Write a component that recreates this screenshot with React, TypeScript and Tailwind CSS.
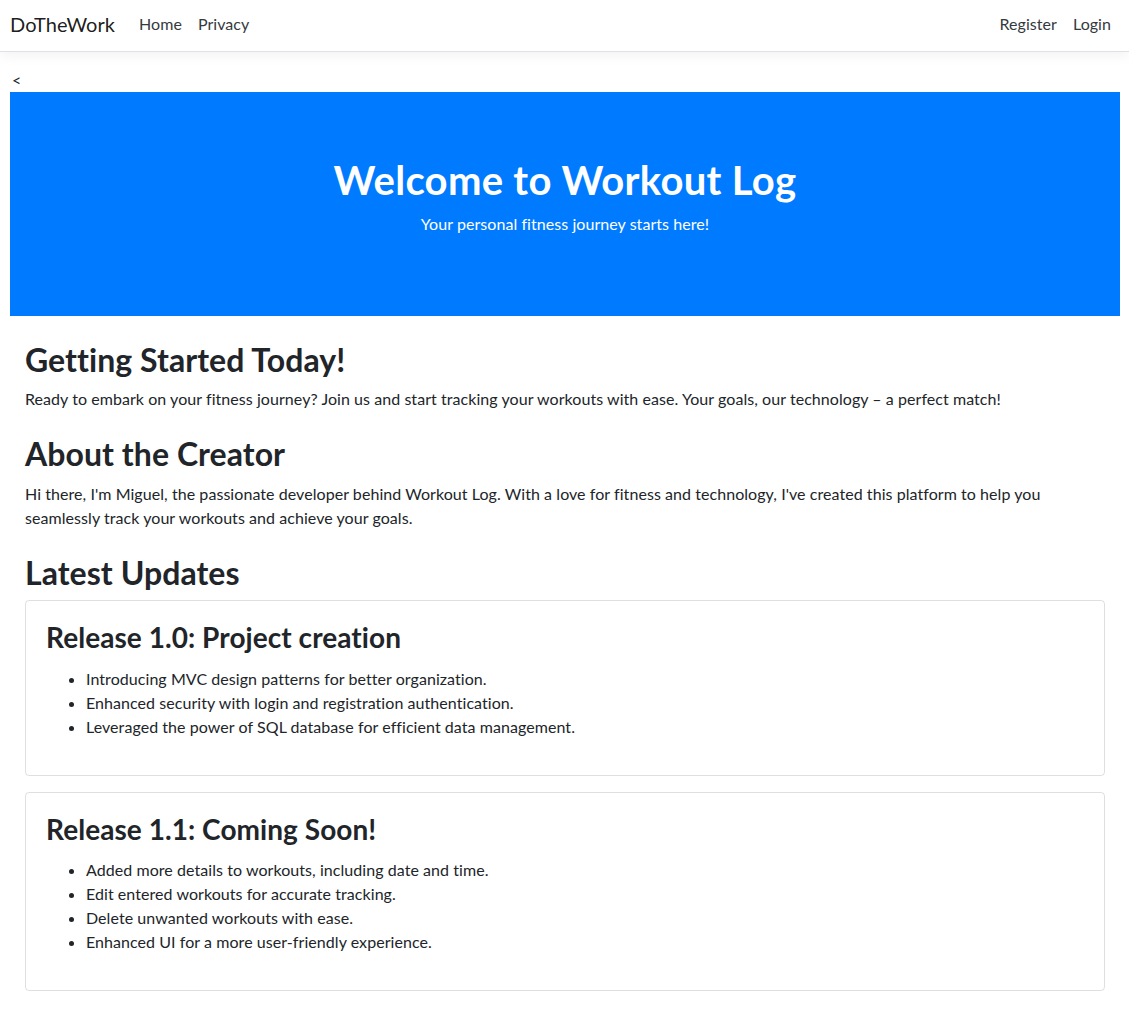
const releases = [
    {
        title: 'Release 1.0: Project creation',
        items: [
            'Introducing MVC design patterns for better organization.',
            'Enhanced security with login and registration authentication.',
            'Leveraged the power of SQL database for efficient data management.',
        ],
    },
    {
        title: 'Release 1.1: Coming Soon!',
        items: [
            'Added more details to workouts, including date and time.',
            'Edit entered workouts for accurate tracking.',
            'Delete unwanted workouts with ease.',
            'Enhanced UI for a more user-friendly experience.',
        ],
    },
];

export default function App() {
    return (
        <div className="min-h-screen bg-white text-[#212529] text-[16px] leading-6 tracking-[0.06px] font-['Lato','Liberation_Sans',sans-serif]">
            <nav className="h-[52px] bg-white border-b border-[#dee2e6] shadow-[0_4px_12px_rgba(0,0,0,0.05)] flex items-center px-[10px] pb-1 mb-4">
                <a href="#" className="text-[20px] text-[rgba(0,0,0,0.9)] mr-4">DoTheWork</a>
                <a href="#" className="px-2 text-[#343a40]">Home</a>
                <a href="#" className="px-2 text-[#343a40]">Privacy</a>
                <div className="ml-auto flex">
                    <a href="#" className="px-2 text-[#343a40]">Register</a>
                    <a href="#" className="px-2 text-[#343a40]">Login</a>
                </div>
            </nav>

            <main className="pl-[10px] pr-[9px]">
                <div className="h-6 leading-6 text-[16px] pl-[2px]">
                    <a href="#" className="text-[#212529]">&lt;</a>
                </div>

                <div className="bg-[#007bff] text-white text-center py-16 px-8 mb-[17px]">
                    <h1 className="text-[40px] leading-[1.2] font-bold tracking-[0.3px] mb-2">Welcome to Workout Log</h1>
                    <p className="mb-4">Your personal fitness journey starts here!</p>
                </div>

                <div className="px-[15px]">
                    <section className="pt-2">
                        <h2 className="text-[32px] leading-[1.2] font-bold mb-2">Getting Started Today!</h2>
                        <p className="mb-4">
                            Ready to embark on your fitness journey? Join us and start tracking your workouts with ease. Your goals, our technology – a perfect match!
                        </p>
                    </section>

                    <section className="pt-2">
                        <h2 className="text-[32px] leading-[1.2] font-bold mb-2">About the Creator</h2>
                        <p className="mb-4 max-w-[1030px]">
                            Hi there, I'm Miguel, the passionate developer behind Workout Log. With a love for fitness and technology, I've created this platform to help you seamlessly track your workouts and achieve your goals.
                        </p>
                    </section>

                    <section className="pt-2">
                        <h2 className="text-[32px] leading-[1.2] font-bold mb-2">Latest Updates</h2>
                        {releases.map((r) => (
                            <div key={r.title} className="border border-[rgba(0,0,0,0.125)] rounded-[4px] p-5 mb-4">
                                <h3 className="text-[28px] leading-[1.2] font-bold mb-3">{r.title}</h3>
                                <ul className="list-disc pl-10 mb-4">
                                    {r.items.map((item) => (
                                        <li key={item}>{item}</li>
                                    ))}
                                </ul>
                            </div>
                        ))}
                    </section>
                </div>
            </main>
        </div>
    );
}
